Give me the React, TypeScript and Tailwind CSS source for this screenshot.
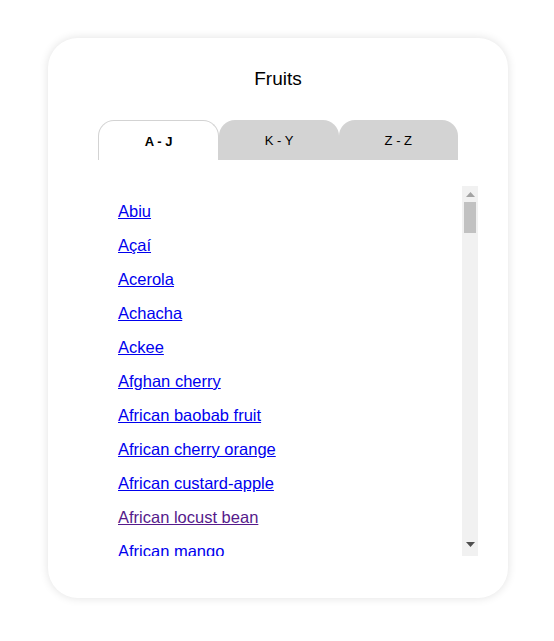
import { useState } from "react";

const fruits = [
  "Abiu", "Açaí", "Acerola", "Achacha", "Ackee", "Afghan cherry", "African baobab fruit",
  "African cherry orange", "African custard-apple", "African locust bean", "African mango",
  "African medlar", "African moringa", "African nutmeg", "African pear", "African star apple",
  "Agave", "Aguaje", "Akebi", "Alligator apple", "Alpine strawberry", "Amazon grape",
  "Ambarella", "American black elderberry", "American chestnut", "American gooseberry",
  "American groundnut", "American hazelnut", "American persimmon", "American plum",
  "Amla", "Andean blackberry", "Apple", "Apricot", "Araza", "Arhat", "Aronia", "Asam",
  "Atemoya", "Avocado", "Babaco", "Bael", "Bambangan", "Banana", "Barbados cherry",
  "Barberry", "Bearberry", "Beechnut", "Bignay", "Bilberry", "Bilimbi", "Biriba",
  "Bitter gourd", "Black apple", "Black mulberry", "Black raspberry", "Blackberry",
  "Blackcurrant", "Blood lime", "Blueberry", "Boysenberry", "Brazil nut", "Breadfruit",
  "Buffaloberry", "Burdekin plum", "Bush tomato", "Butternut", "Cacao", "Calamansi",
  "Camu camu", "Canistel", "Cantaloupe", "Cape gooseberry", "Carambola", "Cashew apple",
  "Cempedak", "Ceylon gooseberry", "Chayote", "Cherimoya", "Cherry", "Chokeberry",
  "Cloudberry", "Coconut", "Cocoplum", "Cranberry", "Crowberry", "Cupuaçu", "Currant",
  "Damson", "Date", "Desert lime", "Dewberry", "Dragonfruit", "Duku", "Durian",
  "Elderberry", "Emblic", "Emu apple", "Feijoa", "Fig", "Finger lime", "Gac",
  "Genip", "Goji berry", "Gooseberry", "Governor's plum", "Grape", "Grapefruit",
  "Guanabana", "Guava", "Hackberry", "Hawthorn", "Honeydew", "Huckleberry",
  "Ice cream bean", "Ilama", "Illawarra plum", "Imbu", "Indian fig", "Jabuticaba",
  "Jackfruit", "Jambolan", "Japanese plum", "Jatobá", "Jostaberry", "Jujube",
];

const tabs = ["A - J", "K - Y", "Z - Z"];
const visited = new Set(["African locust bean"]);

// the browser hides native scrollbars here, so draw the classic one over the list
function FakeScrollbar() {
  return (
    <div className="pointer-events-none absolute top-0 right-0 flex h-full w-[16px] flex-col items-center bg-[#f1f1f1]">
      <svg width="9" height="5" viewBox="0 0 9 5" className="mt-[6px]">
        <path d="M4.5 0 L9 5 L0 5 Z" fill="#a3a3a3" />
      </svg>
      <div className="mt-[5px] h-[31px] w-[12px] bg-[#c1c1c1]" />
      <svg width="9" height="5" viewBox="0 0 9 5" className="mt-auto mb-[9px]">
        <path d="M0 0 L9 0 L4.5 5 Z" fill="#505050" />
      </svg>
    </div>
  );
}

export default function App() {
  const [active, setActive] = useState(0);

  return (
    <div className="min-h-screen bg-white pt-[38px] font-['Liberation_Sans',_Arial,_sans-serif]">
      <div className="ml-[48px] flex h-[560px] w-[460px] flex-col rounded-[30px] bg-white pl-[50px] shadow-[0_0_10px_rgba(0,0,0,0.12)]">
        <h1 className="w-[360px] pt-[29px] text-center text-[19px] leading-6 text-black">
          Fruits
        </h1>

        <div className="mt-[29px] flex h-10 w-[360px]">
          {tabs.map((t, i) => (
            <button
              key={t}
              onClick={() => setActive(i)}
              className={
                i === active
                  ? "flex-1 cursor-pointer rounded-t-[16px] border border-b-0 border-[#d3d3d3] bg-white pt-[2px] text-[13px] font-bold text-black"
                  : "flex-1 cursor-pointer rounded-t-[16px] bg-[#d3d3d3] pt-[2px] text-[13px] text-black"
              }
            >
              {t}
            </button>
          ))}
        </div>

        <div className="relative mt-[26px] h-[370px] w-[380px]">
          <div className="h-full overflow-y-scroll">
            <ul className="pt-[16px] pl-5">
              {fruits.map((f) => (
                <li key={f} className="h-[34px] text-[16.5px] leading-[18px]">
                  <a
                    href="#"
                    className={
                      visited.has(f)
                        ? "text-[#551a8b] underline"
                        : "text-[#0000ee] underline"
                    }
                  >
                    {f}
                  </a>
                </li>
              ))}
            </ul>
          </div>
          <FakeScrollbar />
        </div>
      </div>
    </div>
  );
}
